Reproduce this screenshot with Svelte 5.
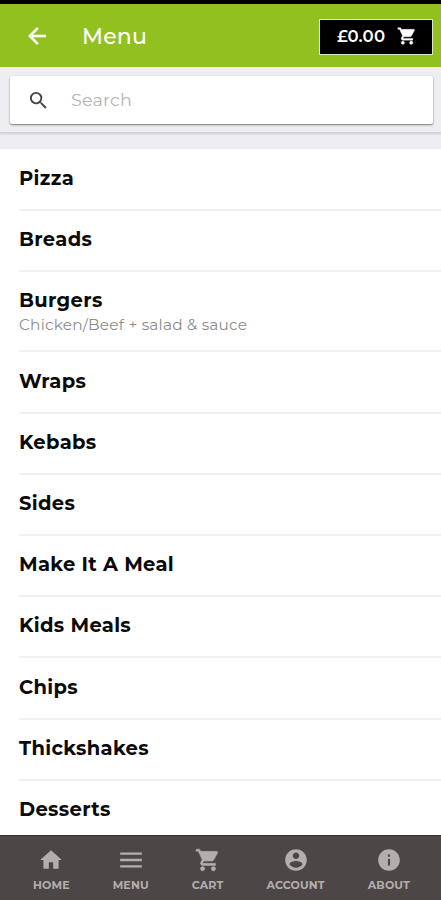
<script>
  let search = "";

  const categories = [
    { name: "Pizza" },
    { name: "Breads" },
    { name: "Burgers", description: "Chicken/Beef + salad & sauce" },
    { name: "Wraps" },
    { name: "Kebabs" },
    { name: "Sides" },
    { name: "Make It A Meal" },
    { name: "Kids Meals" },
    { name: "Chips" },
    { name: "Thickshakes" },
    { name: "Desserts" },
  ];

  // Used in the header and in the tab bar
  const cartPath =
    "M7 18c-1.1 0-1.99.9-1.99 2S5.9 22 7 22s2-.9 2-2-.9-2-2-2zM1 2v2h2l3.6 7.59-1.35 2.45c-.16.28-.25.61-.25.96 0 1.1.9 2 2 2h12v-2H7.42c-.14 0-.25-.11-.25-.25l.03-.12.9-1.63h7.45c.75 0 1.41-.41 1.75-1.03l3.58-6.49A1.003 1.003 0 0 0 20 4H5.21l-.94-2H1zm16 16c-1.1 0-1.99.9-1.99 2s.89 2 1.99 2 2-.9 2-2-.9-2-2-2z";

  const tabs = [
    { id: "home", label: "HOME", path: "M10 20v-6h4v6h5v-8h3L12 3 2 12h3v8z" },
    { id: "menu", label: "MENU", path: "M2 19h20v-2.200H2V19zm0-5.900h20v-2.200H2v2.200zM2 5v2.200h20V5H2z" },
    { id: "cart", label: "CART", path: cartPath },
    {
      id: "account",
      label: "ACCOUNT",
      path: "M12 2C6.480 2 2 6.480 2 12s4.480 10 10 10 10-4.480 10-10S17.520 2 12 2zm0 3c1.660 0 3 1.340 3 3s-1.340 3-3 3-3-1.340-3-3 1.340-3 3-3zm0 14.200c-2.500 0-4.710-1.280-6-3.220.03-1.990 4-3.080 6-3.080 1.990 0 5.970 1.090 6 3.080-1.290 1.940-3.500 3.220-6 3.220z",
    },
    {
      id: "about",
      label: "ABOUT",
      path: "M12 2C6.480 2 2 6.480 2 12s4.480 10 10 10 10-4.480 10-10S17.520 2 12 2zm1 15h-2v-6h2v6zm0-8h-2V7h2v2z",
    },
  ];
</script>

<div class="app">
  <header>
    <button class="back" aria-label="Back">
      <svg viewBox="0 0 24 24">
        <path d="M20 11H7.830l5.590-5.590L12 4l-8 8 8 8 1.410-1.410L7.830 13H20v-2z" />
      </svg>
    </button>
    <h1>Menu</h1>
    <button class="basket">
      <span>£0.00</span>
      <svg viewBox="0 0 24 24"><path d={cartPath} /></svg>
    </button>
  </header>

  <div class="toolbar">
    <label class="search">
      <svg viewBox="0 0 24 24">
        <path
          d="M15.500 14h-.79l-.28-.27A6.471 6.471 0 0 0 16 9.500 6.500 6.500 0 1 0 9.500 16c1.610 0 3.090-.59 4.230-1.570l.27.28v.79l5 4.990L20.490 19l-4.990-5zm-6 0C7.010 14 5 11.990 5 9.500S7.010 5 9.500 5 14 7.010 14 9.500 11.990 14 9.500 14z"
        />
      </svg>
      <input type="text" placeholder="Search" bind:value={search} />
    </label>
  </div>

  <main>
    <ul>
      {#each categories as category}
        <li>
          <h2>{category.name}</h2>
          {#if category.description}
            <p>{category.description}</p>
          {/if}
        </li>
      {/each}
    </ul>
  </main>

  <nav>
    {#each tabs as tab}
      <button class="tab {tab.id}">
        <svg viewBox="0 0 24 24"><path d={tab.path} /></svg>
        <span>{tab.label}</span>
      </button>
    {/each}
  </nav>
</div>

<style>
  :global(body) {
    margin: 0;
  }

  .app {
    display: flex;
    flex-direction: column;
    height: 900px;
    overflow: hidden;
    background: #eeeef2;
    font-family: Montserrat, Inter, sans-serif;
  }

  button {
    border: 0;
    padding: 0;
    background: none;
    font-family: inherit;
    color: inherit;
  }

  svg {
    display: block;
    fill: currentColor;
  }

  header {
    display: flex;
    flex: none;
    align-items: center;
    box-sizing: border-box;
    height: 67px;
    padding: 2px 8px 0 24px;
    border-top: 4px solid #000;
    background: #92c11f;
    color: #fff;
  }

  .back svg {
    width: 26px;
    height: 26px;
    margin-bottom: 2px;
    stroke: currentColor;
    stroke-width: 0.5px;
  }

  h1 {
    flex: 1;
    margin: 0 0 0 32px;
    font-size: 22px;
    font-weight: 500;
    line-height: 30px;
    letter-spacing: 0.2px;
  }

  .basket {
    display: flex;
    align-items: center;
    box-sizing: border-box;
    width: 114px;
    height: 36px;
    padding-left: 17px;
    border: 1px solid #dbe8b8;
    background: #000;
    font-size: 16.500px;
    font-weight: 600;
  }

  .basket span {
    width: 60px;
    margin-bottom: 2px;
    text-align: left;
    letter-spacing: 0.2px;
  }

  .basket svg {
    width: 20px;
    height: 20px;
    margin-bottom: 2px;
  }

  .basket svg,
  .cart svg {
    stroke: currentColor;
    stroke-width: 0.4px;
  }

  .toolbar {
    flex: none;
    box-sizing: border-box;
    height: 66px;
    padding: 9px 8px 0 10px;
    border-bottom: 1px solid #d3d3d7;
    box-shadow: 0 1px 2px rgba(0, 0, 0, 0.14);
  }

  .search {
    display: flex;
    align-items: center;
    height: 48px;
    padding-left: 17px;
    border-radius: 2px;
    background: #fff;
    box-shadow: 0 1px 2px rgba(0, 0, 0, 0.5);
  }

  .search svg {
    flex: none;
    width: 23px;
    height: 23px;
    color: #444;
  }

  .search input {
    flex: 1;
    min-width: 0;
    margin: 0 0 2px 21px;
    padding: 0;
    border: 0;
    outline: 0;
    background: none;
    font-family: inherit;
    font-size: 17.500px;
    letter-spacing: 0.2px;
  }

  .search input::placeholder {
    color: #b4b4b4;
    opacity: 1;
  }

  main {
    flex: 1;
    min-height: 0;
    margin-top: 16px;
    overflow: hidden;
    background: #fff;
  }

  ul {
    margin: 0;
    padding: 0 0 0 19px;
    list-style: none;
  }

  li {
    padding: 16.200px 0 19px;
    border-bottom: 2px solid #f0f0f0;
  }

  li:first-child {
    padding-top: 17px;
  }

  h2 {
    margin: 0;
    color: #0a0a0a;
    font-size: 19.500px;
    font-weight: 700;
    line-height: 24px;
    letter-spacing: 0.35px;
  }

  p {
    margin: 0 0 -3px;
    padding-top: 3px;
    color: #8b8b8b;
    font-size: 15.300px;
    font-weight: 400;
    line-height: 19px;
    letter-spacing: 0.22px;
  }

  nav {
    display: flex;
    flex: none;
    justify-content: space-between;
    box-sizing: border-box;
    height: 65px;
    padding: 0 31px 0 33px;
    border-top: 1px solid #34302f;
    background: #4c4746;
    color: #b3aeae;
  }

  .tab {
    display: flex;
    flex-direction: column;
    align-items: center;
    padding-top: 11px;
    font-size: 11px;
    font-weight: 700;
    line-height: 14px;
    letter-spacing: 0.15px;
  }

  .tab svg {
    width: 26px;
    height: 26px;
    margin-bottom: 5px;
  }
</style>
